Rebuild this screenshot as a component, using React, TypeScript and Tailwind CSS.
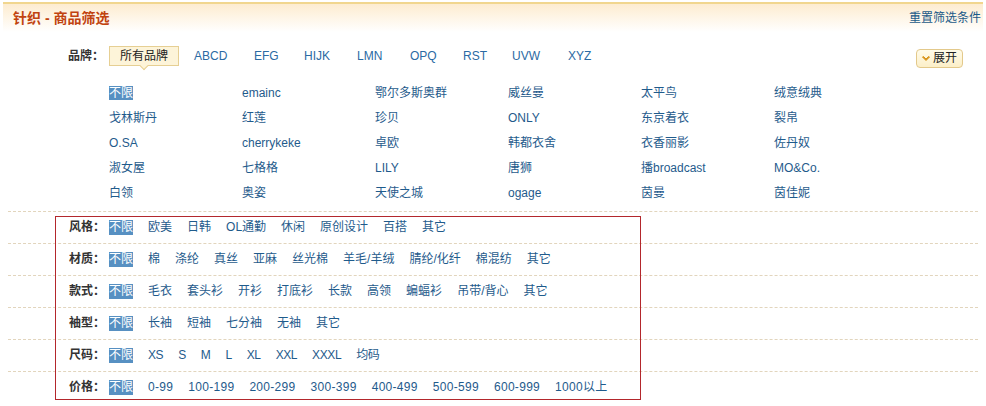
import React from 'react';

// letter tabs keep the uneven spacing of the original page
const brandLetters: { text: string; w: string }[] = [
  { text: 'ABCD', w: 'w-[60px]' },
  { text: 'EFG', w: 'w-[50px]' },
  { text: 'HIJK', w: 'w-[53px]' },
  { text: 'LMN', w: 'w-[53px]' },
  { text: 'OPQ', w: 'w-[53px]' },
  { text: 'RST', w: 'w-[49px]' },
  { text: 'UVW', w: 'w-[56px]' },
  { text: 'XYZ', w: 'w-[40px]' },
];

const brands = [
  '不限', 'emainc', '鄂尔多斯奥群', '威丝曼', '太平鸟', '绒意绒典',
  '戈林斯丹', '红莲', '珍贝', 'ONLY', '东京着衣', '裂帛',
  'O.SA', 'cherrykeke', '卓欧', '韩都衣舍', '衣香丽影', '佐丹奴',
  '淑女屋', '七格格', 'LILY', '唐狮', '播broadcast', 'MO&Co.',
  '白领', '奥姿', '天使之城', 'ogage', '茵曼', '茵佳妮',
];

const filters: { label: string; items: string[]; tracking: string }[] = [
  { label: '风格', items: ['欧美', '日韩', 'OL通勤', '休闲', '原创设计', '百搭', '其它'], tracking: '' },
  { label: '材质', items: ['棉', '涤纶', '真丝', '亚麻', '丝光棉', '羊毛/羊绒', '腈纶/化纤', '棉混纺', '其它'], tracking: '' },
  { label: '款式', items: ['毛衣', '套头衫', '开衫', '打底衫', '长款', '高领', '蝙蝠衫', '吊带/背心', '其它'], tracking: '' },
  { label: '袖型', items: ['长袖', '短袖', '七分袖', '无袖', '其它'], tracking: '' },
  { label: '尺码', items: ['XS', 'S', 'M', 'L', 'XL', 'XXL', 'XXXL', '均码'], tracking: 'tracking-[-0.4px]' },
  { label: '价格', items: ['0-99', '100-199', '200-299', '300-399', '400-499', '500-599', '600-999', '1000以上'], tracking: 'tracking-[0.3px]' },
];

export default function App() {
  return (
    <div
      className="w-[986px] h-[406px] bg-white overflow-hidden text-[12px] leading-[15px]"
      style={{ fontFamily: '"Liberation Sans", Arial, "Noto Sans CJK SC", sans-serif' }}
    >
      {/* Header */}
      <div className="mx-[3px] mt-[2px] h-[30px] border-t-2 border-[#f1d68e] bg-gradient-to-b from-[#fdecd0] to-white flex items-center justify-between pl-[10px] pr-[2px]">
        <h1 className="text-[14px] font-bold text-[#c1430f] leading-[18px]">针织 - 商品筛选</h1>
        <a className="text-[#1b5a88] cursor-pointer">重置筛选条件</a>
      </div>

      <div className="mx-[8px]">
        {/* Brand letters */}
        <div className="flex items-center mt-[14px] h-[20px]">
          <div className="w-[96px] text-right font-bold text-[#333]">品牌：</div>
          <div className="relative ml-[5px] h-[20px] px-[10px] flex items-center bg-[#fdf4d9] border border-[#e6cf93] text-[#222]">
            所有品牌
            <span className="absolute left-1/2 -bottom-[4px] -ml-[3px] w-[6px] h-[6px] rotate-45 bg-[#fdf4d9] border-r border-b border-[#e6cf93]" />
          </div>
          <div className="flex ml-[15px] text-[#2b6aa3]">
            {brandLetters.map((l) => (
              <a key={l.text} className={`${l.w} cursor-pointer`}>{l.text}</a>
            ))}
          </div>
          <button className="ml-auto mr-[15px] mt-[5px] h-[19px] px-[5px] flex items-center gap-[3px] rounded-[4px] border border-[#e3c98b] bg-gradient-to-b from-[#fffbea] to-[#fcefc8] text-[#222]">
            <svg width="8" height="6" viewBox="0 0 8 6">
              <polygon points="0.5,1 4,4.5 7.5,1 6.5,0.5 4,3 1.5,0.5" fill="#d8941b" stroke="#d8941b" strokeWidth="1" strokeLinejoin="round" />
            </svg>
            展开
          </button>
        </div>

        {/* Brand grid */}
        <div className="ml-[101px] mt-[15px] mb-[5px] grid grid-cols-[repeat(6,133px)] auto-rows-[25px] items-center">
          {brands.map((b, i) => (
            <div key={b}>
              {i === 0 ? (
                <span className="bg-[#5790c2] text-white">{b}</span>
              ) : (
                <a className="text-[#1f5b8c] cursor-pointer">{b}</a>
              )}
            </div>
          ))}
        </div>

        {/* Attribute rows */}
        <div className="relative">
          {filters.map((f) => (
            <div key={f.label} className="flex items-center h-[32px] border-t border-dashed border-[#e2d5bd]">
              <div className="w-[97px] text-right font-bold text-[#333]">{f.label}：</div>
              <div className="flex ml-[4px] gap-[15px]">
                <span className="bg-[#5790c2] text-white">不限</span>
                {f.items.map((it) => (
                  <a key={it} className={`text-[#1f5b8c] cursor-pointer ${f.tracking}`}>{it}</a>
                ))}
              </div>
            </div>
          ))}
          {/* annotation frame */}
          <div className="absolute left-[47px] top-[5px] w-[586px] h-[184px] border border-[#b3272c] pointer-events-none" />
        </div>
      </div>
    </div>
  );
}
